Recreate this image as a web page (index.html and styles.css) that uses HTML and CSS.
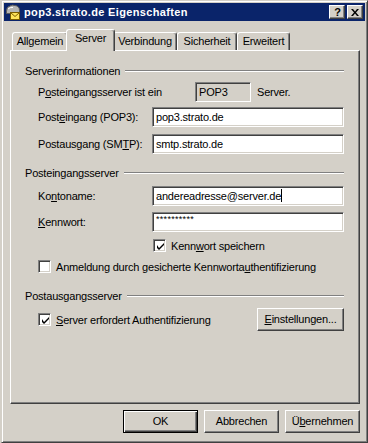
FILE: index.html
```html
<!DOCTYPE HTML>
<html>
  <head>
    <link rel="stylesheet" href="styles.css">
  </head>
  <body>
    <div class="window">
      <div class="titlebar">
        <svg class="app_icon" width="16" height="16" viewBox="0 0 16 16">
          <path d="M1.5 7 Q1.5 2.5 5 2 Q7 0.5 10 1.5 Q14.5 2 14.5 6.5 L14.5 9.5 L1.5 9.5 Z" fill="#b4b4b4" stroke="#5a5a5a"/>
          <path d="M3 5 Q5 3 8 3.5" fill="none" stroke="#ffffff"/>
          <rect x="5.5" y="8.5" width="9" height="7" fill="#ffe25a" stroke="#7a5a00"/>
          <path d="M5.5 8.5 L10 12.5 L14.5 8.5" fill="none" stroke="#7a5a00"/>
        </svg>
        <span class="title">pop3.strato.de Eigenschaften</span>
        <div class="title_buttons">
          <div class="tbtn help">?</div>
          <div class="tbtn">
            <svg width="8" height="7" viewBox="0 0 8 7">
              <path d="M0 0 L2 0 L4 2.5 L6 0 L8 0 L5 3.5 L8 7 L6 7 L4 4.5 L2 7 L0 7 L3 3.5 Z" fill="#000"/>
            </svg>
          </div>
        </div>
      </div>

      <div class="content">
        <div class="tabs">
          <div class="tab tab_allgemein">Allgemein</div>
          <div class="tab tab_server active">Server</div>
          <div class="tab tab_verbindung">Verbindung</div>
          <div class="tab tab_sicherheit">Sicherheit</div>
          <div class="tab tab_erweitert">Erweitert</div>
        </div>

        <div class="panel">
          <div class="group_title">
            <span>Serverinformationen</span>
            <div class="etch"></div>
          </div>
          <div class="row row_type">
            <label class="label_wide">P<u>o</u>steingangsserver ist ein</label>
            <div class="readonly">POP3</div>
            <span class="server_word">Server.</span>
          </div>
          <div class="row row_first">
            <label class="label">Post<u>e</u>ingang (POP3):</label>
            <div class="field">pop3.strato.de</div>
          </div>
          <div class="row row_third">
            <label class="label">Postausgang (SM<u>T</u>P):</label>
            <div class="field">smtp.strato.de</div>
          </div>

          <div class="group_title group_two">
            <span>Posteingangsserver</span>
            <div class="etch"></div>
          </div>
          <div class="row row_konto">
            <label class="label">Ko<u>n</u>toname:</label>
            <div class="field">andereadresse@server.de<span class="caret"></span></div>
          </div>
          <div class="row row_kennwort">
            <label class="label"><u>K</u>ennwort:</label>
            <div class="field password">**********</div>
          </div>
          <div class="row check_row save_row">
            <div class="checkbox checked">
              <svg width="7" height="7" viewBox="0 0 7 7">
                <path d="M0 2 L0 5 L2 7 L7 2 L7 0 L2 5 Z" fill="#000"/>
              </svg>
            </div>
            <span class="check_label">Kenn<u>w</u>ort speichern</span>
          </div>
          <div class="row check_row spa_row">
            <div class="checkbox"></div>
            <span class="check_label">Anmeldung durch gesicherte Kennworta<u>u</u>thentifizierung</span>
          </div>

          <div class="group_title group_three">
            <span>Postausgangsserver</span>
            <div class="etch"></div>
          </div>
          <div class="row auth_row">
            <div class="checkbox checked">
              <svg width="7" height="7" viewBox="0 0 7 7">
                <path d="M0 2 L0 5 L2 7 L7 2 L7 0 L2 5 Z" fill="#000"/>
              </svg>
            </div>
            <span class="check_label"><u>S</u>erver erfordert Authentifizierung</span>
            <div class="button settings"><u>E</u>instellungen...</div>
          </div>
        </div>

        <div class="dialog_buttons">
          <div class="button default">OK</div>
          <div class="button">Abbrechen</div>
          <div class="button">Ü<u>b</u>ernehmen</div>
        </div>
      </div>
    </div>
  </body>
</html>
```
FILE: styles.css
```css
* {
  box-sizing: border-box;
}
body {
  margin: 0;
  background-color: #d4d0c8;
  font-family: "Liberation Sans", Arial, sans-serif;
  font-size: 11px;
  letter-spacing: -0.2px;
  color: #000;
}

.window {
  margin-left: 1px;
  width: 367px;
  height: 443px;
  border: 1px solid;
  border-color: #d4d0c8 #404040 #404040 #d4d0c8;
  box-shadow: inset 1px 1px #fff, inset -1px -1px #808080;
  padding: 2px;
  background-color: #d4d0c8;
}

.titlebar {
  height: 18px;
  background-color: #0a246a;
  display: flex;
  align-items: center;
  padding: 0 2px 0 1px;
  color: #fff;
}

.app_icon {
  flex: none;
}

.title {
  flex: 1;
  margin-left: 3px;
  font-weight: bold;
  letter-spacing: 0.35px;
}

.title_buttons {
  display: flex;
  gap: 2px;
}

.tbtn {
  width: 16px;
  height: 14px;
  background-color: #d4d0c8;
  border: 1px solid;
  border-color: #fff #404040 #404040 #fff;
  box-shadow: inset -1px -1px #808080;
  display: flex;
  align-items: center;
  justify-content: center;
  color: #000;
}

.help {
  font-weight: bold;
  font-size: 11px;
  line-height: 12px;
  padding-left: 1px;
}

.content {
  padding: 0 4px 0 6px;
}

.tabs {
  display: flex;
  align-items: flex-end;
  height: 29px;
  padding-left: 2px;
}

.tab {
  height: 18px;
  border: 1px solid;
  border-color: #fff #404040 transparent #fff;
  border-bottom: none;
  border-radius: 3px 3px 0 0;
  box-shadow: inset -1px 0 #808080;
  text-align: center;
  line-height: 16px;
  background-color: #d4d0c8;
}

.tab.active {
  height: 22px;
  margin: 0 -2px -1px;
  line-height: 17px;
  position: relative;
  z-index: 1;
}

.tab_allgemein { width: 56px; }
.tab_server { width: 49px; }
.tab_verbindung { width: 64px; }
.tab_sicherheit { width: 60px; }
.tab_erweitert { width: 53px; }

.panel {
  width: 350px;
  height: 354px;
  border: 1px solid;
  border-color: #fff #404040 #404040 #fff;
  box-shadow: inset -1px -1px #808080;
  padding: 13px 15px 0 14px;
}

.group_title {
  display: flex;
  align-items: center;
  height: 13px;
}

.group_two { margin-top: 12px; }
.group_three { margin-top: 16px; }

.etch {
  flex: 1;
  margin-left: 5px;
  height: 2px;
  border-top: 1px solid #808080;
  border-bottom: 1px solid #fff;
}

.row {
  display: flex;
  align-items: center;
  padding-left: 13px;
  height: 20px;
}

.row_type { margin-top: 5px; }
.row_first { margin-top: 5px; }
.row_third { margin-top: 7px; }
.row_konto { margin-top: 7px; }
.row_kennwort { margin-top: 6px; }

.label_wide {
  width: 157px;
  flex: none;
}

.label {
  width: 114px;
  flex: none;
}

.field, .readonly {
  height: 20px;
  border: 1px solid;
  border-color: #808080 #fff #fff #808080;
  box-shadow: inset 1px 1px #404040, inset -1px -1px #d4d0c8;
  padding: 0 3px;
  line-height: 18px;
  white-space: nowrap;
}

.field {
  flex: 1;
  background-color: #fff;
}

.readonly {
  width: 56px;
  flex: none;
  background-color: #d4d0c8;
}

.server_word {
  margin-left: 6px;
}

.password {
  font-size: 9px;
  line-height: 12px;
  letter-spacing: 0.3px;
}

.caret {
  display: inline-block;
  width: 1px;
  height: 13px;
  background-color: #000;
  vertical-align: -2px;
}

.check_row {
  height: 13px;
}

.save_row {
  margin-top: 7px;
  padding-left: 128px;
}

.spa_row {
  margin-top: 8px;
}

.checkbox {
  width: 13px;
  height: 13px;
  flex: none;
  background-color: #fff;
  border: 1px solid;
  border-color: #808080 #fff #fff #808080;
  box-shadow: inset 1px 1px #404040, inset -1px -1px #d4d0c8;
  display: flex;
  align-items: center;
  justify-content: center;
}

.checkbox svg {
  margin-left: 1px;
  margin-top: 1px;
}

.check_label {
  margin-left: 5px;
  white-space: nowrap;
}

.auth_row {
  margin-top: 6px;
  height: 23px;
}

.button {
  width: 75px;
  height: 23px;
  flex: none;
  border: 1px solid;
  border-color: #fff #404040 #404040 #fff;
  box-shadow: inset -1px -1px #808080;
  text-align: center;
  line-height: 21px;
  background-color: #d4d0c8;
}

.settings {
  width: 87px;
  margin-left: auto;
}

.button.default {
  border-color: #000;
  box-shadow: inset 1px 1px #fff, inset -1px -1px #404040, inset -2px -2px #808080;
}

.dialog_buttons {
  display: flex;
  justify-content: flex-end;
  gap: 6px;
  margin-top: 6px;
  padding-right: 1px;
}
```
